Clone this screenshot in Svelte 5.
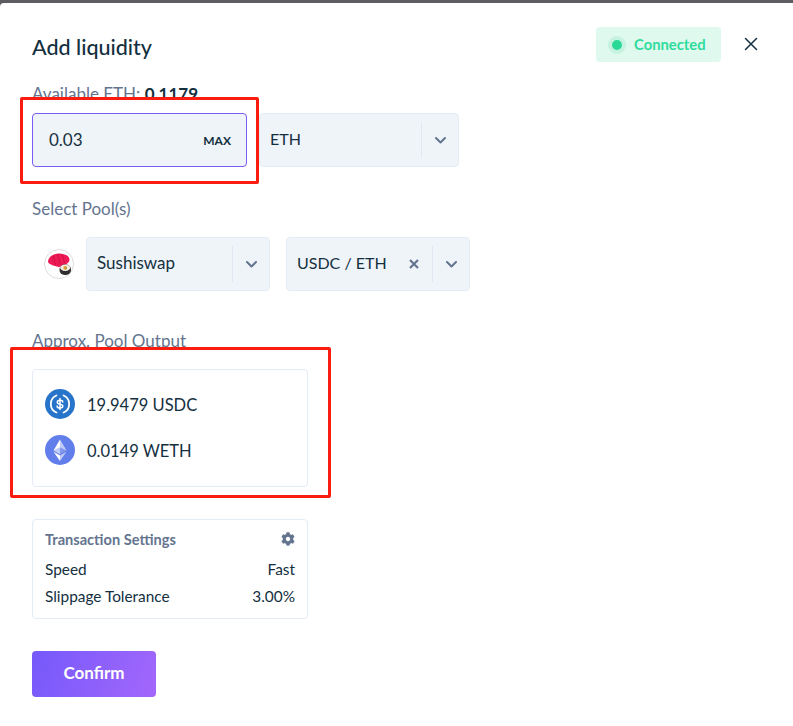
<script>
  const chevron = 'M1 1l4.500 4.500L10 1';
</script>

{#snippet chev()}
  <svg class="chev" width="11" height="7" viewBox="0 0 11 7" fill="none"><path d={chevron} stroke="#64748f" stroke-width="2" stroke-linecap="round" stroke-linejoin="round"/></svg>
{/snippet}

<div class="page">
  <div class="topbar"></div>
  <div class="modal">
    <header class="head">
      <h1>Add liquidity</h1>
      <div class="head-right">
        <div class="status"><span class="dot"></span><span class="status-text">Connected</span></div>
        <svg class="close" width="14" height="14" viewBox="0 0 14 14" fill="none"><path d="M1.500 1.500l11 11M12.500 1.500l-11 11" stroke="#14303f" stroke-width="1.500" stroke-linecap="round"/></svg>
      </div>
    </header>

    <p class="label avail">Available ETH: <b>0.1179</b></p>
    <div class="row amount">
      <div class="input"><span>0.03</span><span class="max">MAX</span></div>
      <div class="select eth"><span class="val">ETH</span><span class="sep"></span><span class="arrow">{@render chev()}</span></div>
    </div>

    <p class="label pools">Select Pool(s)</p>
    <div class="row poolrow">
      <div class="sushi">
        <svg width="30" height="30" viewBox="0 0 30 30">
          <circle cx="15" cy="15" r="14.500" fill="#fff" stroke="#dcdcdc"/>
          <path d="M4 12.500C4.500 8 9 4.500 15 4.500c5 0 10 2 10.500 5.500.3 3-2.500 5-5.500 6.500-3 1.200-5 2-7.500 1-3-1-8.500-2.500-8.500-5z" fill="#ee1a55"/>
          <path d="M9 6.500l2.500 9M13.500 5l3 10.500M18 5.500l2.500 8" stroke="#c80f42" stroke-width=".8"/>
          <rect x="15.500" y="15.500" width="11.500" height="10.500" rx="5" fill="#2f2e2c"/>
          <ellipse cx="21.200" cy="18.800" rx="5" ry="3.200" fill="#f3efe3"/>
          <circle cx="21.200" cy="18.800" r="1.900" fill="#ec9a36"/>
          <circle cx="22" cy="19.200" r=".8" fill="#6fa03c"/>
        </svg>
      </div>
      <div class="select sushiswap"><span class="val big">Sushiswap</span><span class="sep"></span><span class="arrow">{@render chev()}</span></div>
      <div class="select pair">
        <span class="val">USDC / ETH</span>
        <svg class="clear" width="10" height="10" viewBox="0 0 10 10" fill="none"><path d="M1 1l8 8M9 1l-8 8" stroke="#64748f" stroke-width="2.200"/></svg>
        <span class="sep"></span><span class="arrow">{@render chev()}</span>
      </div>
    </div>

    <p class="label approx">Approx. Pool Output</p>
    <div class="card output">
      <div class="token">
        <svg width="30" height="30" viewBox="0 0 30 30">
          <circle cx="15" cy="15" r="15" fill="#2775ca"/>
          <path d="M11.500 6.500a9.200 9.200 0 0 0 0 17M18.500 6.500a9.200 9.200 0 0 1 0 17" stroke="#fff" stroke-width="1.800" fill="none" stroke-linecap="round"/>
          <path d="M17.800 13c-.2-1.200-1.300-1.800-2.800-1.800-1.600 0-2.700.7-2.700 2 0 2.900 5.500 1.300 5.500 3.900 0 1.200-1.200 2-2.800 2-1.600 0-2.700-.7-2.900-2M15 9.500v11" stroke="#fff" stroke-width="1.500" fill="none" stroke-linecap="round"/>
        </svg>
        <span class="amt">19.9479 USDC</span>
      </div>
      <div class="token">
        <svg width="30" height="30" viewBox="0 0 30 30">
          <circle cx="15" cy="15" r="15" fill="#627eea"/>
          <path d="M15 4.500v8l6.500 3z" fill="#fff" fill-opacity=".6"/>
          <path d="M15 4.500l-6.500 11 6.500-3z" fill="#fff"/>
          <path d="M15 20.600v5.400l6.500-9.300z" fill="#fff" fill-opacity=".6"/>
          <path d="M15 20.600l-6.500-3.900L15 26z" fill="#fff"/>
          <path d="M15 19.400l6.500-3.900-6.500-3z" fill="#fff" fill-opacity=".2"/>
          <path d="M8.500 15.500l6.500 3.900v-6.900z" fill="#fff" fill-opacity=".6"/>
        </svg>
        <span class="amt">0.0149 WETH</span>
      </div>
    </div>

    <div class="card settings">
      <div class="set-head">
        <span>Transaction Settings</span>
        <svg width="14" height="14" viewBox="0 0 512 512"><path fill="#64748f" d="M487.400 315.700l-42.600-24.600c4.300-23.200 4.300-47 0-70.200l42.600-24.600c4.900-2.800 7.100-8.600 5.500-14-11.100-35.600-30-67.800-54.700-94.600-3.800-4.100-10-5.100-14.800-2.300L380.800 110c-17.900-15.400-38.500-27.300-60.800-35.100V25.800c0-5.600-3.900-10.500-9.400-11.700-36.700-8.200-74.300-7.800-109.200 0-5.500 1.200-9.400 6.100-9.400 11.700V75c-22.200 7.900-42.800 19.800-60.800 35.100L88.700 85.500c-4.900-2.800-11-1.900-14.800 2.300-24.700 26.700-43.600 58.900-54.700 94.600-1.700 5.400.6 11.200 5.500 14L67.300 221c-4.300 23.200-4.300 47 0 70.200l-42.600 24.600c-4.900 2.800-7.100 8.600-5.500 14 11.100 35.600 30 67.800 54.700 94.600 3.800 4.100 10 5.100 14.800 2.300l42.600-24.600c17.900 15.400 38.500 27.300 60.800 35.100v49.200c0 5.600 3.900 10.500 9.400 11.700 36.700 8.200 74.300 7.800 109.200 0 5.500-1.200 9.400-6.100 9.400-11.700v-49.200c22.200-7.900 42.800-19.800 60.800-35.100l42.600 24.600c4.900 2.800 11 1.900 14.800-2.300 24.700-26.700 43.600-58.900 54.700-94.600 1.500-5.500-.7-11.300-5.600-14.100zM256 336c-44.100 0-80-35.900-80-80s35.900-80 80-80 80 35.900 80 80-35.900 80-80 80z"/></svg>
      </div>
      <div class="set-row speed"><span>Speed</span><span>Fast</span></div>
      <div class="set-row slip"><span>Slippage Tolerance</span><span>3.00%</span></div>
    </div>

    <button class="confirm">Confirm</button>
  </div>

  <div class="mark mark1"></div>
  <div class="mark mark2"></div>
</div>

<style>
  :global(body) { margin: 0; background: #fff; }
  .page {
    position: relative;
    width: 793px;
    height: 726px;
    overflow: hidden;
    background: #5b5d60;
    font-family: "Lato", "Open Sans", sans-serif;
    color: #14303f;
    font-size: 16px;
  }
  .topbar { height: 3px; }
  .modal {
    background: #fff;
    height: 723px;
    border-top-left-radius: 4px;
    padding: 0 32px;
    box-sizing: border-box;
  }
  .head {
    display: flex;
    justify-content: space-between;
    align-items: flex-start;
    padding-top: 24px;
    height: 81px;
    box-sizing: border-box;
  }
  h1 { margin: 7px 0 0; font-size: 21.500px; font-weight: 500; line-height: 26px; }
  .head-right { display: flex; align-items: center; margin-right: 3px; }
  .status {
    width: 125px;
    height: 35px;
    box-sizing: border-box;
    padding-left: 12px;
    display: flex;
    align-items: center;
    gap: 8px;
    background: #dff9ef;
    border-radius: 4px;
    color: #2fdc9c;
    font-size: 14.800px;
    font-weight: 700;
  }
  .status-text { padding-bottom: 1px; }
  .dot {
    width: 10px;
    height: 10px;
    border-radius: 50%;
    background: #2bd996;
    border: 4px solid #c6f3e1;
  }
  .close { margin-left: 23px; margin-top: -1px; }
  .label { margin: 0; color: #64748f; font-size: 17px; line-height: 20px; }
  .label b { color: #14303f; font-weight: 700; }
  .row { display: flex; }
  .avail { height: 29px; }
  .amount { gap: 12px; }
  .input {
    width: 215px;
    height: 54px;
    box-sizing: border-box;
    padding: 0 15px 1px 16px;
    display: flex;
    align-items: center;
    justify-content: space-between;
    background: #eff4f9;
    border: 1px solid #7a5cf5;
    border-radius: 4px;
    font-size: 17px;
  }
  .max { font-size: 12px; font-weight: 700; padding-top: 1px; }
  .select {
    height: 54px;
    box-sizing: border-box;
    display: flex;
    align-items: center;
    background: #eff4f9;
    border: 1px solid #e3ecf7;
    border-radius: 4px;
    padding-left: 10px;
    font-size: 16px;
  }
  .eth { width: 200px; }
  .sushiswap { width: 184px; margin-right: 16px; }
  .pair { width: 184px; }
  .val { flex: 1; padding-bottom: 3px; }
  .big { font-size: 17px; }
  .sep { width: 1px; height: 36px; background: #e0e8f2; }
  .arrow { width: 36px; display: flex; justify-content: center; }
  .chev { display: block; }
  .clear { margin-right: 13px; }
  .pools { margin-top: 32px; height: 38px; }
  .poolrow { align-items: center; }
  .sushi { display: flex; margin: 0 12px; }
  .approx { margin-top: 40px; height: 38px; }
  .card {
    width: 276px;
    box-sizing: border-box;
    border: 1px solid #e3ecf7;
    border-radius: 4px;
  }
  .output { height: 118px; padding: 19px 12px 0; display: flex; flex-direction: column; gap: 16px; font-size: 16.500px; }
  .token { display: flex; align-items: center; gap: 12px; height: 30px; }
  .amt { padding-top: 2px; }
  .settings { margin-top: 32px; height: 100px; padding: 9px 12px 0; font-size: 15.400px; }
  .set-head { display: flex; justify-content: space-between; align-items: center; color: #64748f; font-weight: 700; font-size: 14.600px; height: 20px; }
  .set-head span { padding-top: 1px; }
  .set-row { display: flex; justify-content: space-between; line-height: 20px; }
  .speed { margin-top: 10px; }
  .slip { margin-top: 7px; }
  .confirm {
    display: block;
    margin-top: 32px;
    width: 124px;
    height: 46px;
    border: 0;
    padding: 0 0 3px;
    border-radius: 4px;
    background: linear-gradient(110deg, #7559fb, #a367fb);
    color: #fff;
    font: 700 17px "Lato", sans-serif;
  }
  .mark {
    position: absolute;
    box-sizing: border-box;
    border: 3px solid #fb1c10;
    border-radius: 2px;
  }
  .mark1 { left: 20px; top: 97px; width: 239px; height: 87px; }
  .mark2 { left: 10px; top: 347px; width: 321px; height: 151px; }
</style>
